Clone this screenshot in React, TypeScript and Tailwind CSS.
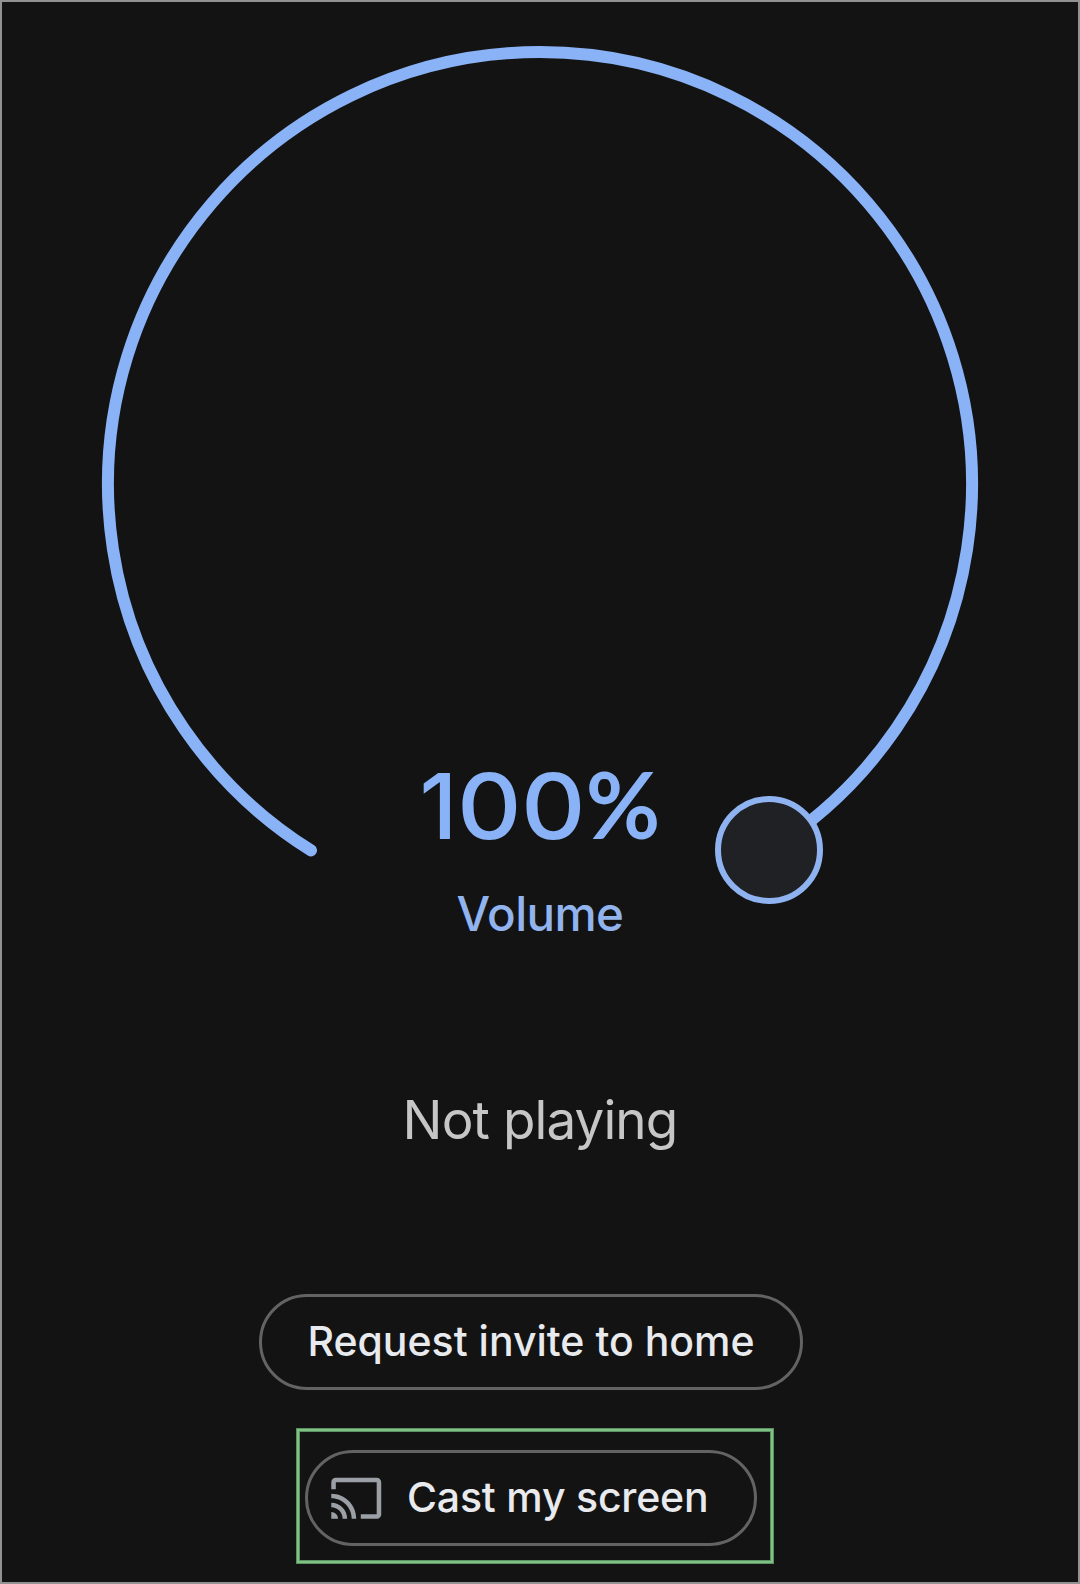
function VolumeDial() {
  return (
    <div className="relative h-[908px] w-full">
      <svg className="block" width="1076" height="908" viewBox="2 2 1076 908" fill="none">
        <path d="M311 850.4A432 432 0 1 1 769 850.4" stroke="#8ab2f6" strokeWidth="12" strokeLinecap="round" />
        <circle cx="769" cy="850" r="51" fill="#202124" stroke="#8fb3f0" strokeWidth="6" />
      </svg>
      <div className="absolute inset-x-0 top-[747px] flex flex-col items-center whitespace-nowrap">
        <div className="flex h-[110px] items-baseline text-[91px] leading-[110px] font-medium text-[#8ab2f6]">
          <span>1</span>
          <span className="origin-left scale-x-[1.1] tracking-[-0.5px]">00</span>
          <span className="ml-[12px] font-['Lato',sans-serif] font-bold tracking-normal">%</span>
        </div>
        <div className="mt-[26px] h-[58px] text-[47.5px] leading-[58px] font-medium tracking-[-0.6px] text-[#91b3ee]">Volume</div>
      </div>
    </div>
  );
}

function CastIcon() {
  return (
    <svg className="h-[54.5px] w-[54.5px] shrink-0" viewBox="0 0 24 24" fill="#9aa0a6">
      <path d="M21 3H3c-1.1 0-2 .9-2 2v3h2V5h18v14h-7v2h7c1.1 0 2-.9 2-2V5c0-1.1-.9-2-2-2zM1 18v3h3c0-1.66-1.34-3-3-3zm0-4v2c2.76 0 5 2.24 5 5h2c0-3.87-3.13-7-7-7zm0-4v2c4.97 0 9 4.03 9 9h2c0-6.08-4.93-11-11-11z" />
    </svg>
  );
}

export default function App() {
  return (
    <main className="flex h-[1584px] w-[1080px] flex-col overflow-hidden border-2 border-[#929292] bg-[#131313] font-['Inter',sans-serif] whitespace-nowrap">
      <VolumeDial />
      <div className="mt-[178px] flex h-[64px] items-center justify-center text-[53px] leading-[64px] tracking-[-0.9px] text-[#c6c6c6]">
        Not playing
      </div>
      <button className="mt-[142px] ml-[257px] flex h-[96px] w-[544px] shrink-0 items-center justify-center rounded-full border-3 border-[#636364] text-[41px] font-medium tracking-[0px] text-[#e8eaed]">
        Request invite to home
      </button>
      <div className="mt-[38px] ml-[294px] flex h-[136px] w-[478px] shrink-0 border border-[#5d9163]">
        <div className="flex h-full w-full border-2 border-[#7fc384] pt-[19px] outline outline-1 -outline-offset-3 outline-[#5d9163]">
          <button className="ml-[6px] flex h-[96px] w-[452px] shrink-0 items-center rounded-full border-3 border-[#636364] pl-[20.5px] text-[41px] font-medium tracking-[-0.2px] text-[#e8eaed]">
            <CastIcon />
            <span className="ml-[24px]">Cast my screen</span>
          </button>
        </div>
      </div>
    </main>
  );
}
